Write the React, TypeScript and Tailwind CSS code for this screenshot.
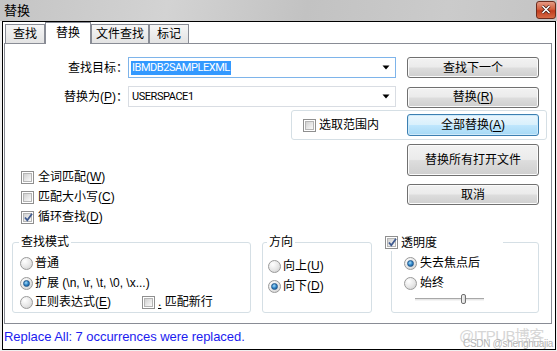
import React from "react";

const FONT = "font-['Liberation_Sans','Noto_Sans_CJK_SC',sans-serif]";

function CheckBox({ checked }: { checked?: boolean }) {
  return (
    <span className="relative inline-block w-[13px] h-[13px] shrink-0 border border-[#8f8f8f] bg-white">
      <span className="absolute left-[1px] top-[1px] w-[9px] h-[9px] border border-[#b5b5b5] bg-[linear-gradient(135deg,#d0d0d0_0%,#eeeeee_70%,#fafafa_100%)]" />
      {checked && (
        <svg className="absolute left-[1px] top-[0px]" width="11" height="11" viewBox="0 0 11 11">
          <path d="M2 5.5 L4.3 8.3 L9 1.8" fill="none" stroke="#3f5a8f" strokeWidth="1.8" />
        </svg>
      )}
    </span>
  );
}

function Radio({ checked }: { checked?: boolean }) {
  return (
    <span className="relative inline-flex items-center justify-center w-[13px] h-[13px] shrink-0 rounded-full border border-[#9a9a9a] bg-[radial-gradient(circle_at_35%_30%,#ffffff_0%,#e6e6e6_55%,#c9c9c9_100%)]">
      {checked && (
        <span className="w-[7px] h-[7px] rounded-full border border-[#23588c] bg-[radial-gradient(circle_at_40%_35%,#a8dcf8_0%,#2f86c9_50%,#0f4a86_100%)]" />
      )}
    </span>
  );
}

function Btn({
  children,
  h,
  def,
}: {
  children: React.ReactNode;
  h: string;
  def?: boolean;
}) {
  return (
    <div
      className={
        "w-[132px] flex items-center justify-center rounded-[3px] border text-[12px] leading-none " +
        h +
        (def
          ? " border-[#3c7fb1] bg-[linear-gradient(#eaf6fd_0%,#d9f0fc_48%,#bee6fd_52%,#a7d9f5_100%)] shadow-[inset_0_0_0_1px_#cdeafb]"
          : " border-[#707070] bg-[linear-gradient(#f2f2f2_0%,#ebebeb_48%,#dddddd_52%,#cfcfcf_100%)] shadow-[inset_0_0_0_1px_#fbfbfb]")
      }
    >
      {children}
    </div>
  );
}

function Combo({
  children,
  focus,
}: {
  children: React.ReactNode;
  focus?: boolean;
}) {
  return (
    <div
      className={
        "w-[268px] h-[21px] flex items-center border bg-white pl-[2px] pr-[5px] " +
        (focus ? "border-[#7eb4ea]" : "border-[#d9dde3]")
      }
    >
      <div className="flex-1 flex items-center text-[11px] tracking-[-0.45px] font-['Roboto','Liberation_Sans',sans-serif]">{children}</div>
      <svg width="8" height="5" viewBox="0 0 8 5">
        <path d="M0.5 0.5 L7.5 0.5 L4 4.5 Z" fill="#000" />
      </svg>
    </div>
  );
}

function U({ children }: { children: React.ReactNode }) {
  return <span className="underline underline-offset-[2px]">{children}</span>;
}

export default function App() {
  return (
    <div className={"relative w-[557px] h-[351px] overflow-hidden bg-[#f0f0f0] text-black text-[12px] " + FONT}>
      {/* Title bar */}
      <div className="h-[21px] flex items-center bg-[linear-gradient(100deg,#c4c4c4_0%,#d3d3d3_30%,#c2c2c2_55%,#cbcbcb_80%,#c4c4c4_100%)]">
        <span className="ml-[4px] text-[13px] leading-none">替换</span>
        <div className="ml-auto mr-[1px] mb-[2px] w-[20px] h-[18px] rounded-[3px] border border-[#6c2c1e] bg-[linear-gradient(#e59a84_0%,#d3603f_45%,#c23d1f_55%,#d66a45_100%)] flex items-center justify-center">
          <svg width="10" height="9" viewBox="0 0 10 9">
            <path d="M1.5 1 L8.5 8 M8.5 1 L1.5 8" stroke="#3a1a12" strokeWidth="3" />
            <path d="M1.5 1 L8.5 8 M8.5 1 L1.5 8" stroke="#ffffff" strokeWidth="1.6" />
          </svg>
        </div>
      </div>

      {/* Window */}
      <div className="ml-[2px] w-[554px] h-[329px] border border-black bg-white flex flex-col">
        {/* Tabs */}
        <div className="relative z-10 h-[21px] flex items-end pl-[2px]">
          <div className="w-[40px] h-[19px] border-t border-l border-r border-[#898c95] bg-[linear-gradient(#f6f6f6,#e3e3e3)] flex items-center justify-center">
            查找
          </div>
          <div className="w-[46px] h-[22px] -mb-[1px] border-t border-l border-r border-[#898c95] bg-white flex items-center justify-center pb-[2px]">
            替换
          </div>
          <div className="w-[58px] h-[19px] border-t border-l border-r border-[#898c95] bg-[linear-gradient(#f6f6f6,#e3e3e3)] flex items-center justify-center">
            文件查找
          </div>
          <div className="w-[40px] h-[19px] border-t border-l border-r border-[#898c95] bg-[linear-gradient(#f6f6f6,#e3e3e3)] flex items-center justify-center">
            标记
          </div>
        </div>

        {/* Panel */}
        <div className="ml-[1px] w-[548px] h-[281px] border border-[#898c95] bg-white flex flex-col">
          {/* Row 1 */}
          <div className="mt-[13px] h-[21px] flex items-center">
            <div className="w-[123px] text-right">查找目标：</div>
            <Combo focus>
              <span className="bg-[#3399ff] text-white leading-[14px] px-[1px]">IBMDB2SAMPLEXML</span>
            </Combo>
            <div className="ml-[11px]">
              <Btn h="h-[21px]">查找下一个</Btn>
            </div>
          </div>

          {/* Row 2 */}
          <div className="mt-[8px] h-[21px] flex items-center">
            <div className="w-[123px] text-right">
              替换为(<U>P</U>)：
            </div>
            <Combo>
              <span className="leading-[14px] px-[1px]">USERSPACE1</span>
            </Combo>
            <div className="ml-[11px] mt-[1px]">
              <Btn h="h-[21px]">
                替换(<U>R</U>)
              </Btn>
            </div>
          </div>

          {/* Row 3 */}
          <div className="mt-[3px] ml-[286px] w-[256px] h-[30px] rounded-[3px] border border-[#d5dfe5] flex items-center">
            <div className="w-[115px] pl-[11px] flex items-center gap-[3px]">
              <CheckBox />
              <span>选取范围内</span>
            </div>
            <Btn h="h-[22px]" def>
              全部替换(<U>A</U>)
            </Btn>
          </div>

          {/* Row 4 */}
          <div className="mt-[4px] flex">
            <div className="w-[402px] pl-[16px] pt-[23px] flex flex-col">
              <div className="h-[20px] flex items-center gap-[4px]">
                <CheckBox />
                <span>
                  全词匹配(<U>W</U>)
                </span>
              </div>
              <div className="h-[20px] flex items-center gap-[4px]">
                <CheckBox />
                <span>
                  匹配大小写(<U>C</U>)
                </span>
              </div>
              <div className="h-[20px] flex items-center gap-[4px]">
                <CheckBox checked />
                <span>
                  循环查找(<U>D</U>)
                </span>
              </div>
            </div>
            <div className="flex flex-col gap-[8px]">
              <Btn h="h-[32px]">替换所有打开文件</Btn>
              <Btn h="h-[21px]">取消</Btn>
            </div>
          </div>

          {/* Bottom groups */}
          <div className="mt-[15px] pl-[7px] flex">
            {/* 查找模式 */}
            <div className="relative w-[239px] h-[71px] rounded-[3px] border border-[#d5dfe5] pt-[10px] pl-[7px]">
              <span className="absolute left-[6px] -top-[9px] px-[2px] bg-white leading-[16px]">查找模式</span>
              <div className="h-[20px] flex items-center gap-[2px]">
                <Radio />
                <span>普通</span>
              </div>
              <div className="h-[20px] flex items-center gap-[2px]">
                <Radio checked />
                <span>
                  扩展 (\n, \r, \t, \0, \x...)
                </span>
              </div>
              <div className="h-[18px] flex items-center">
                <div className="w-[122px] flex items-center gap-[2px]">
                  <Radio />
                  <span>
                    正则表达式(<U>E</U>)
                  </span>
                </div>
                <CheckBox />
                <span className="ml-[3px]">
                  <U>.</U> 匹配新行
                </span>
              </div>
            </div>

            {/* 方向 */}
            <div className="relative ml-[11px] w-[110px] h-[71px] rounded-[3px] border border-[#d5dfe5] pt-[13px] pl-[5px]">
              <span className="absolute left-[4px] -top-[9px] px-[2px] bg-white leading-[16px]">方向</span>
              <div className="h-[20px] flex items-center gap-[2px]">
                <Radio />
                <span>
                  向上(<U>U</U>)
                </span>
              </div>
              <div className="h-[20px] flex items-center gap-[2px]">
                <Radio checked />
                <span>
                  向下(<U>D</U>)
                </span>
              </div>
            </div>

            {/* 透明度 */}
            <div className="relative ml-[19px] w-[148px] h-[71px] rounded-[3px] border border-[#d5dfe5] pt-[10px] pl-[12px]">
              <span className="absolute -left-[7px] -top-[9px] w-[118px] h-[17px] bg-white flex items-center gap-[3px]">
                <CheckBox checked />
                <span>透明度</span>
              </span>
              <div className="h-[20px] flex items-center gap-[3px]">
                <Radio checked />
                <span>失去焦点后</span>
              </div>
              <div className="h-[20px] flex items-center gap-[3px]">
                <Radio />
                <span>始终</span>
              </div>
              <div className="relative ml-[11px] w-[69px] h-[12px] flex items-center">
                <div className="w-full h-[3px] border-t border-[#a8a8a8] bg-[#e6e6e6] border-b border-b-[#f4f4f4]" />
                <div className="absolute left-[46px] top-[1px] w-[5px] h-[10px] rounded-[2px] border border-[#707070] bg-[linear-gradient(90deg,#f4f4f4,#d8d8d8)]" />
              </div>
            </div>
          </div>
        </div>

        {/* Status */}
        <div className="flex-1 flex items-center pl-[1px] text-[13px] tracking-[-0.05px] text-[#1c1cf0]">
          Replace All: 7 occurrences were replaced.
        </div>
      </div>

      {/* Watermark */}
      <div className="absolute left-[459px] top-[328px] text-[15px] leading-none tracking-[-0.6px] text-[#d6d6d6] whitespace-nowrap">@ITPUB博客</div>
      <div className="absolute left-[463px] top-[339px] text-[10px] leading-none tracking-[-0.3px] text-[#b4b4b4] whitespace-nowrap">CSDN @shenghuajia</div>
    </div>
  );
}
